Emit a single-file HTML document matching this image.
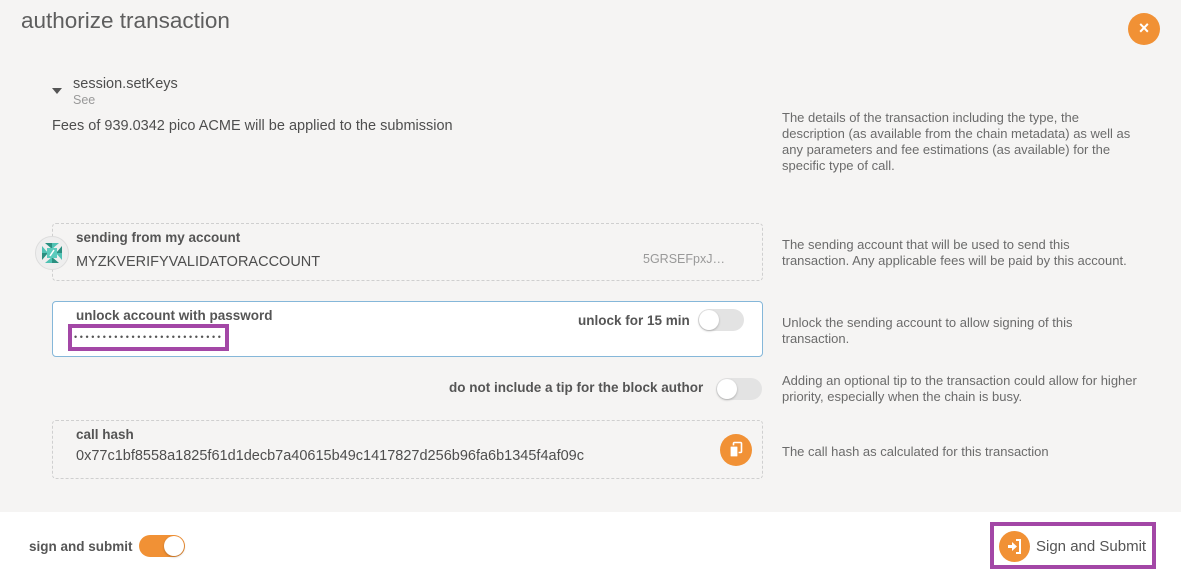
<!DOCTYPE html>
<html><head><meta charset="utf-8"><style>
*{box-sizing:border-box;margin:0;padding:0}
body{width:1181px;height:579px;background:#f5f4f3;font-family:"Liberation Sans",sans-serif;color:#4e4e4e;position:relative;overflow:hidden}
.abs{position:absolute}
.help{position:absolute;left:782px;font-size:13px;line-height:16px;color:#6b6b6b;width:362px}
.box{position:absolute;border:1px dashed #cfcfcf;border-radius:4px}
.lbl{font-size:13.5px;font-weight:bold;color:#555}
.val{font-size:14.5px;color:#4e4e4e}
.tog{position:absolute;width:46px;height:22px;border-radius:11px;background:#e3e3e3}
.tog::after{content:"";position:absolute;left:1px;top:1px;width:20px;height:20px;border-radius:50%;background:#fff;box-shadow:0 1px 2px rgba(0,0,0,.25)}
.orange{background:#f19135}
.tog.orange::after{left:25px}
</style></head><body>
<div class="abs" style="left:21px;top:8px;font-size:22.5px;color:#5e5e5e">authorize transaction</div>
<div class="abs orange" style="left:1128px;top:13px;width:32px;height:32px;border-radius:50%;color:#fff;text-align:center;line-height:31px;font-size:18px;font-weight:bold">×</div>

<div class="abs" style="left:52px;top:88px;width:0;height:0;border-left:5px solid transparent;border-right:5px solid transparent;border-top:6px solid #555"></div>
<div class="abs" style="left:73px;top:76px;font-size:14.5px;color:#4e4e4e">session.setKeys</div>
<div class="abs" style="left:73px;top:93px;font-size:12.5px;color:#999">See</div>
<div class="abs" style="left:52px;top:118px;font-size:14.5px">Fees of 939.0342 pico ACME will be applied to the submission</div>
<div class="help" style="top:110px">The details of the transaction including the type, the description (as available from the chain metadata) as well as any parameters and fee estimations (as available) for the specific type of call.</div>

<div class="box" style="left:52px;top:223px;width:711px;height:58px"></div>
<svg class="abs" style="left:35px;top:236px" width="34" height="34" viewBox="0 0 34 34"><circle cx="17" cy="17" r="16.5" fill="#eee" stroke="#ddd"/>
<polygon points="10,7 17,7 17,13" fill="#2a8f80"/><polygon points="27,10 27,17 21,17" fill="#2a8f80"/><polygon points="24,27 17,27 17,21" fill="#2a8f80"/><polygon points="7,24 7,17 13,17" fill="#2a8f80"/>
<polygon points="17,7 24,7 17,13" fill="#4fc1b3"/><polygon points="27,17 27,24 21,17" fill="#4fc1b3"/><polygon points="17,27 10,27 17,21" fill="#4fc1b3"/><polygon points="7,17 7,10 13,17" fill="#4fc1b3"/>
<rect x="12" y="12" width="10" height="10" fill="#5ccbbd"/><path d="M15 20l4-6" stroke="#fff" stroke-width="1.5"/></svg>
<div class="abs lbl" style="left:76px;top:230px">sending from my account</div>
<div class="abs val" style="left:76px;top:254px">MYZKVERIFYVALIDATORACCOUNT</div>
<div class="abs" style="left:643px;top:252px;font-size:12.5px;color:#999">5GRSEFpxJ…</div>
<div class="help" style="top:237px">The sending account that will be used to send this<br>transaction. Any applicable fees will be paid by this account.</div>

<div class="abs" style="left:52px;top:301px;width:711px;height:56px;background:#fff;border:1px solid #85b7d9;border-radius:4px"></div>
<div class="abs lbl" style="left:76px;top:308px">unlock account with password</div>
<div class="abs" style="left:68px;top:324px;width:161px;height:27px;border:4px solid #a347a6"></div>
<div class="abs" style="left:74px;top:331px;font-size:9px;letter-spacing:2.6px;color:#555;line-height:12px">••••••••••••••••••••••••••</div>
<div class="abs lbl" style="left:578px;top:313px">unlock for 15 min</div>
<div class="tog" style="left:698px;top:309px"></div>
<div class="help" style="top:315px">Unlock the sending account to allow signing of this<br>transaction.</div>

<div class="abs lbl" style="left:449px;top:380px">do not include a tip for the block author</div>
<div class="tog" style="left:716px;top:378px"></div>
<div class="help" style="top:373px">Adding an optional tip to the transaction could allow for higher priority, especially when the chain is busy.</div>

<div class="box" style="left:52px;top:420px;width:711px;height:59px"></div>
<div class="abs lbl" style="left:76px;top:427px">call hash</div>
<div class="abs val" style="left:76px;top:448px">0x77c1bf8558a1825f61d1decb7a40615b49c1417827d256b96fa6b1345f4af09c</div>
<div class="abs orange" style="left:720px;top:434px;width:32px;height:32px;border-radius:50%"></div>
<svg class="abs" style="left:728px;top:441px" width="16" height="18" viewBox="0 0 16 18"><rect x="5.5" y="1.5" width="8" height="10" rx="1" fill="none" stroke="#fff" stroke-width="1.6"/><rect x="2" y="5" width="8" height="11" rx="1" fill="#fff" stroke="#f19135" stroke-width="1.2"/></svg>
<div class="help" style="top:444px">The call hash as calculated for this transaction</div>

<div class="abs" style="left:0;top:512px;width:1181px;height:67px;background:#fff"></div>
<div class="abs lbl" style="left:29px;top:539px">sign and submit</div>
<div class="tog orange" style="left:139px;top:535px"></div>
<div class="abs" style="left:990px;top:522px;width:166px;height:47px;border:4px solid #a347a6"></div>
<div class="abs orange" style="left:999px;top:531px;width:31px;height:31px;border-radius:50%"></div>
<svg class="abs" style="left:1006px;top:538px" width="17" height="17" viewBox="0 0 17 17"><path d="M10 2h4v13h-4" fill="none" stroke="#fff" stroke-width="2"/><path d="M2 7h4V4l5 4.5-5 4.5V10H2z" fill="#fff"/></svg>
<div class="abs" style="left:1036px;top:538px;font-size:15px;color:#555">Sign and Submit</div>
</body></html>
